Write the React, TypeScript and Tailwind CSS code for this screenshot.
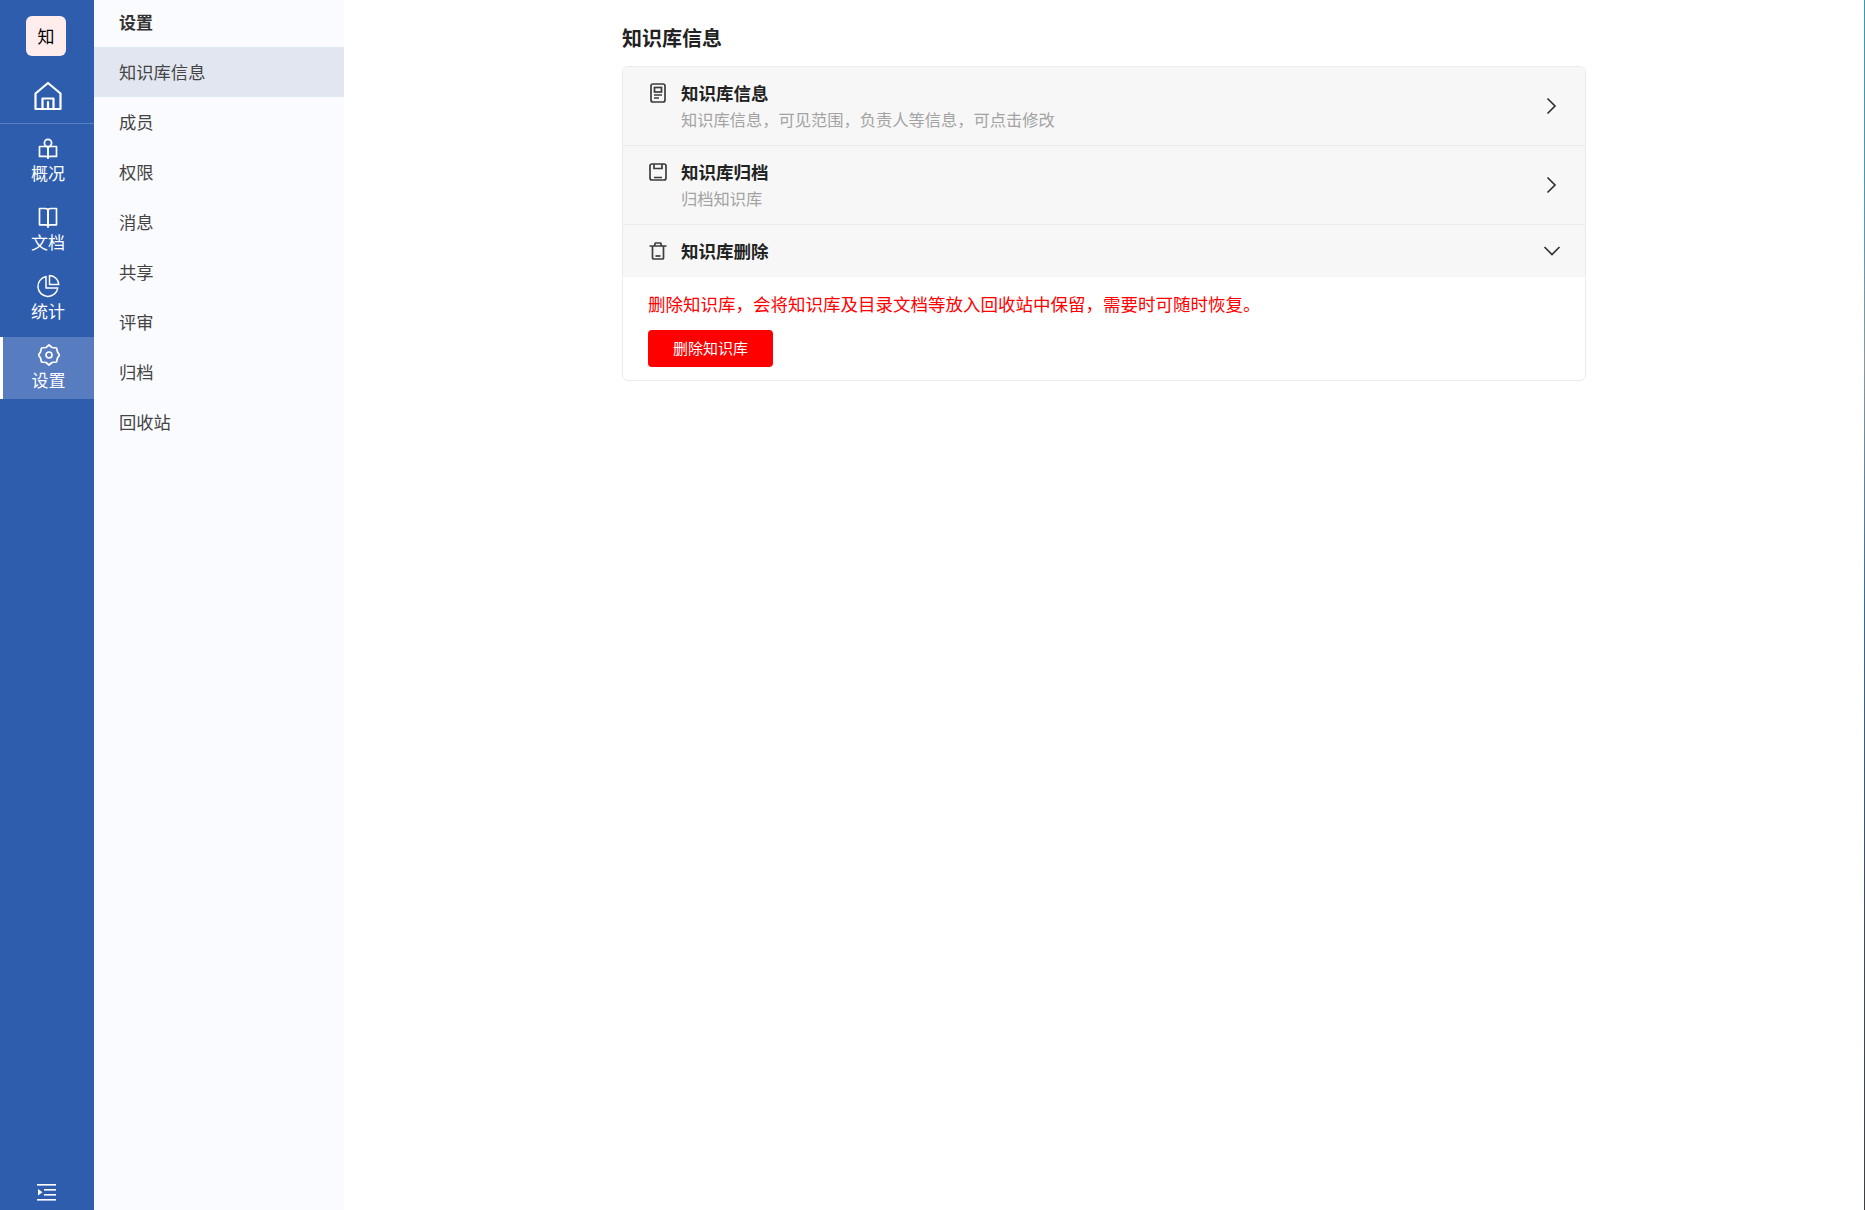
import type { ReactNode } from 'react';

const font = 'font-["Noto_Sans_CJK_SC","Noto_Sans",sans-serif]';

function HomeIcon() {
  return (
    <svg width="30" height="30" viewBox="0 0 30 30" fill="none" stroke="white" strokeWidth="2.2" strokeLinejoin="round" strokeLinecap="round">
      <path d="M2.5 12.5 15 2l12.5 10.5V28h-25z" />
      <path d="M9.5 28V17.5h11V28" />
      <path d="M15 21v7" />
    </svg>
  );
}

function OverviewIcon() {
  return (
    <svg width="20" height="22" viewBox="0 -1 20 22" fill="none" stroke="white" strokeWidth="1.7" strokeLinejoin="round">
      <circle cx="10" cy="5" r="3.6" />
      <path d="M1.5 8.5h6c1.2 0 2.5 1 2.5 2v9.5c0-1-1.2-1.6-2.5-1.6h-6z" />
      <path d="M18.5 8.5h-6c-1.2 0-2.5 1-2.5 2v9.5c0-1 1.2-1.6 2.5-1.6h6z" />
    </svg>
  );
}

function BookIcon() {
  return (
    <svg width="20" height="22" viewBox="0 0 20 22" fill="none" stroke="white" strokeWidth="1.7" strokeLinejoin="round">
      <path d="M1.5 2.5h6C9 2.5 10 3.5 10 5v16c0-1.2-1.2-2.2-2.5-2.2h-6z" />
      <path d="M18.5 2.5h-6C11 2.5 10 3.5 10 5v16c0-1.2 1.2-2.2 2.5-2.2h6z" />
    </svg>
  );
}

function PieIcon() {
  return (
    <svg width="24" height="24" viewBox="0 0 24 24" fill="none" stroke="white" strokeWidth="1.5" strokeLinejoin="round">
      <path d="M10 2.6A10 10 0 1 0 21.8 14H10z" />
      <path d="M13.5 1.5A9.5 9.5 0 0 1 22.8 10.5h-9.3z" />
    </svg>
  );
}

function GearIcon() {
  return (
    <svg width="22" height="22" viewBox="0 0 22 22" fill="none" stroke="white" strokeWidth="1.7" strokeLinejoin="round">
      <path d="M11 1l3 2.500 4.500.5 1 4 2 3-2 3-1 4-4.500.5-3 2.500-3-2.500-4.500-.5-1-4-2-3 2-3 1-4 4.500-.5z" />
      <circle cx="11" cy="11" r="3" />
    </svg>
  );
}

function CollapseIcon() {
  return (
    <svg width="20" height="18" viewBox="0 0 20 18" fill="white">
      <rect x="0" y="0" width="19" height="1.6" />
      <rect x="7" y="5" width="12" height="1.6" />
      <rect x="7" y="10" width="12" height="1.6" />
      <rect x="0" y="15" width="19" height="1.6" />
      <path d="M1 5l4.500 3.300L1 11.600z" />
    </svg>
  );
}

function InfoIcon() {
  return (
    <svg width="18" height="20" viewBox="0 0 18 20" fill="none" stroke="#3d3d3d" strokeWidth="1.7">
      <rect x="2" y="1" width="14" height="18" rx="2" />
      <rect x="5.5" y="4.500" width="7" height="4.500" />
      <path d="M5 12h8M5 15h5" />
    </svg>
  );
}

function ArchiveIcon() {
  return (
    <svg width="18" height="18" viewBox="0 0 18 18" fill="none" stroke="#3d3d3d" strokeWidth="1.7">
      <rect x="1" y="1" width="16" height="16" rx="2" />
      <path d="M5 1v4.500h8V1" />
      <path d="M5 14.500h8" />
    </svg>
  );
}

function TrashIcon() {
  return (
    <svg width="18" height="18" viewBox="0 0 18 18" fill="none" stroke="#3d3d3d" strokeWidth="1.7" strokeLinejoin="round">
      <path d="M.5 4h17" />
      <path d="M5.500 4l.8-3h5.400l.8 3" />
      <path d="M3.500 4v12a1 1 0 0 0 1 1h9a1 1 0 0 0 1-1V4" />
      <path d="M6.500 14h5" />
    </svg>
  );
}

function Chevron({ open }: { open?: boolean }) {
  return (
    <svg width="24" height="24" viewBox="0 0 24 24" fill="none" stroke="#333" strokeWidth="1.7">
      {open ? <path d="M4.500 8l7.500 7.500L19.500 8" /> : <path d="M7.500 4.500 15 12l-7.500 7.500" />}
    </svg>
  );
}

const navItems: { label: string; icon: ReactNode; active?: boolean }[] = [
  { label: '概况', icon: <OverviewIcon /> },
  { label: '文档', icon: <BookIcon /> },
  { label: '统计', icon: <PieIcon /> },
  { label: '设置', icon: <GearIcon />, active: true },
];

const menuItems = ['知识库信息', '成员', '权限', '消息', '共享', '评审', '归档', '回收站'];

function Row({ icon, title, desc, open }: { icon: ReactNode; title: string; desc?: string; open?: boolean }) {
  return (
    <div className={`flex items-center bg-[#f7f7f7] pl-[26px] pr-[21px] ${desc ? 'h-[79px] border-b border-[#ebebeb]' : 'h-[52px]'}`}>
      <div className="flex-1 flex">
        <div className="w-[32px] h-[26px] flex items-center">{icon}</div>
        <div>
          <div className="text-[17.5px] leading-[26px] font-bold text-[#222]">{title}</div>
          {desc && <div className="text-[16.25px] leading-[26px] text-[#a3a3a3]">{desc}</div>}
        </div>
      </div>
      <Chevron open={open} />
    </div>
  );
}

export default function App() {
  return (
    <div className={`flex h-[1210px] w-[1865px] bg-white overflow-hidden ${font}`}>
      {/* Left nav */}
      <aside className="w-[94px] shrink-0 bg-[#2e5dae] flex flex-col">
        <div className="h-[124px] shrink-0 border-b border-[#5a80c2] flex flex-col items-center">
          <div className="mt-[16px] mr-[2px] w-[40px] h-[40px] rounded-[6px] bg-[#ffecec] text-black text-[17px] flex items-center justify-center">知</div>
          <div className="mt-[25px] ml-[2px]"><HomeIcon /></div>
        </div>
        <div className="pt-[6px] flex flex-col gap-[7px]">
          {navItems.map((item) => (
            <div
              key={item.label}
              className={`h-[62px] pb-[2px] flex flex-col items-center justify-center text-white text-[17px] leading-[24px] ${item.active ? 'bg-[#577cc0] border-l-[3px] border-white' : 'pl-[2px]'}`}
            >
              <div className="h-[26px] flex items-center">{item.icon}</div>
              <div>{item.label}</div>
            </div>
          ))}
        </div>
        <div className="mt-auto h-[26px] flex items-start justify-center">
          <CollapseIcon />
        </div>
      </aside>

      {/* Settings menu */}
      <nav className="w-[250px] shrink-0 bg-[#fafbfe]">
        <div className="h-[47px] pb-[3px] pl-[25px] flex items-center font-bold text-[17px] text-[#333]">设置</div>
        {menuItems.map((item, i) => (
          <div key={item} className={`h-[50px] pl-[25px] flex items-center text-[17.3px] text-[#444] ${i === 0 ? 'bg-[#e2e6f0]' : ''}`}>
            {item}
          </div>
        ))}
      </nav>

      {/* Content */}
      <main className="flex-1 pl-[278px] pt-[24px]">
        <h1 className="text-[20px] leading-[28px] font-bold text-[#222] mb-[14px]">知识库信息</h1>
        <div className="w-[964px] rounded-[6px] border border-[#ebebeb] overflow-hidden">
          <Row icon={<InfoIcon />} title="知识库信息" desc="知识库信息，可见范围，负责人等信息，可点击修改" />
          <Row icon={<ArchiveIcon />} title="知识库归档" desc="归档知识库" />
          <Row icon={<TrashIcon />} title="知识库删除" open />
          <div className="pl-[25px] pt-[14px] pb-[13px]">
            <p className="text-[17.5px] leading-[26px] text-[#ff0000]">删除知识库，会将知识库及目录文档等放入回收站中保留，需要时可随时恢复。</p>
            <button className="mt-[13px] w-[125px] h-[37px] rounded-[4px] bg-[#ff0000] text-white text-[15px] flex items-center justify-center">删除知识库</button>
          </div>
        </div>
      </main>
      <div className="w-px shrink-0 bg-[linear-gradient(to_bottom,#2e9ac0_0%,#3f9ab8_15%,#8a979c_30%,#2f6a9a_50%,#3d4a5c_75%,#3c3f45_100%)]" />
    </div>
  );
}
